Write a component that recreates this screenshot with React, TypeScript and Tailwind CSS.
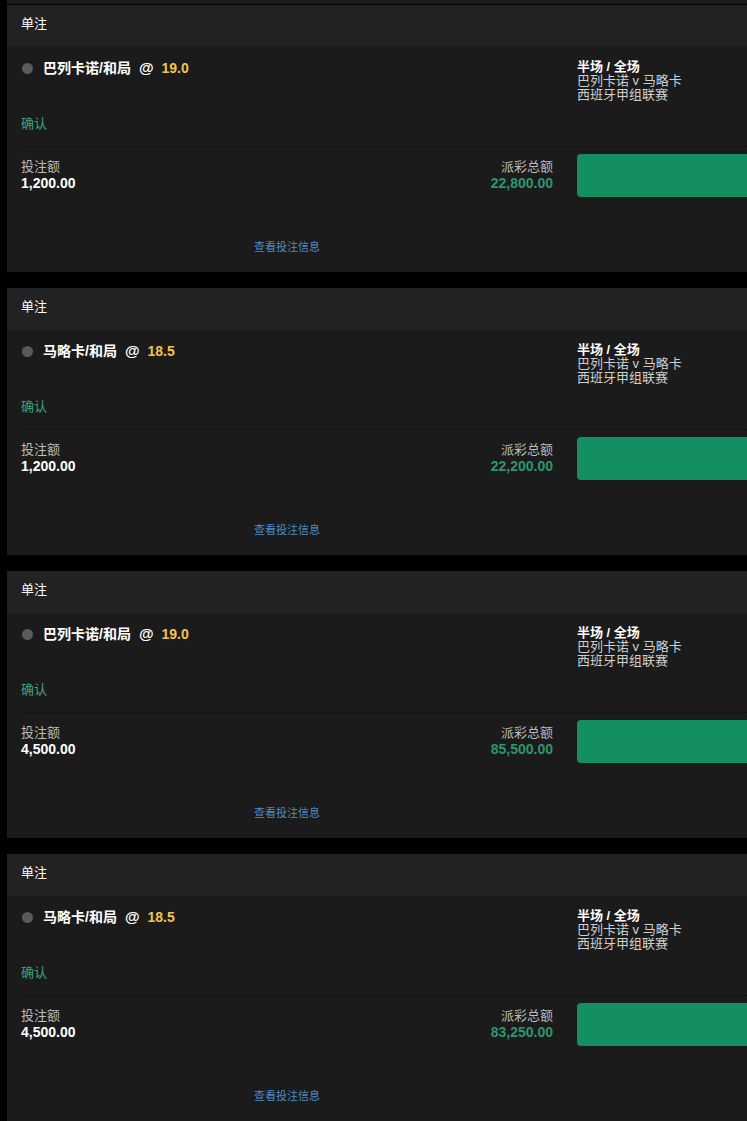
import React from "react";

type Bet = { sel: string; odds: string; stake: string; payout: string };

const bets: Bet[] = [
  { sel: "巴列卡诺/和局", odds: "19.0", stake: "1,200.00", payout: "22,800.00" },
  { sel: "马略卡/和局", odds: "18.5", stake: "1,200.00", payout: "22,200.00" },
  { sel: "巴列卡诺/和局", odds: "19.0", stake: "4,500.00", payout: "85,500.00" },
  { sel: "马略卡/和局", odds: "18.5", stake: "4,500.00", payout: "83,250.00" },
];

function Card({ b }: { b: Bet }) {
  return (
    <div className="ml-[7px] bg-[#1b1b1b]">
      <div className="h-[42px] bg-[#222222] pl-[14px] pt-[11px] text-[13px] leading-[16px] text-white">
        单注
      </div>
      <div className="pl-[14px]">
        <div className="grid grid-cols-[532px_1fr] gap-x-[24px]">
          <div className="flex items-center pt-[11px] h-[31px]">
            <span className="ml-[1px] h-[11px] w-[11px] rounded-full bg-[#5a5a5a]" />
            <span className="ml-[10px] text-[14px] font-bold leading-[20px] text-white">{b.sel}</span>
            <span className="ml-[8px] text-[15px] font-bold leading-[20px] text-white">@</span>
            <span className="ml-[8px] text-[14px] font-bold leading-[20px] text-[#f3c44c]">{b.odds}</span>
          </div>
          <div className="mt-[13px] text-[13px] leading-[14px]">
            <div className="font-bold text-white">半场 / 全场</div>
            <div className="text-[#cfcfcf]">巴列卡诺 v 马略卡</div>
            <div className="text-[#cfcfcf]">西班牙甲组联赛</div>
          </div>
        </div>
        <div className="mt-[14px] text-[13px] leading-[16px] text-[#3da57a]">确认</div>
        <div className="mt-[14px] border-t border-dotted border-[#0c0c0c]" />
        <div className="mt-[7px] grid grid-cols-[532px_1fr] gap-x-[24px]">
          <div className="flex justify-between pt-[5px]">
            <div>
              <div className="text-[13px] leading-[16px] text-[#bdbdbd]">投注额</div>
              <div className="text-[14px] font-bold leading-[16px] text-white">{b.stake}</div>
            </div>
            <div className="text-right">
              <div className="text-[13px] leading-[16px] text-[#bdbdbd]">派彩总额</div>
              <div className="text-[14px] font-bold leading-[16px] text-[#2d966c]">{b.payout}</div>
            </div>
          </div>
          <div className="h-[43px] rounded-l-[4px] bg-[#138f62]" />
        </div>
        <div className="mt-[43px] w-[532px] pb-[18px] text-center text-[11px] leading-[14px] text-[#4b8bc6]">
          查看投注信息
        </div>
      </div>
    </div>
  );
}

export default function App() {
  return (
    <div
      className="min-h-[1121px] w-[747px] overflow-hidden bg-black"
      style={{ fontFamily: '"Liberation Sans", Arial, "Noto Sans CJK SC", sans-serif' }}
    >
      <div className="ml-[7px] h-[4px] bg-[#1b1b1b]" />
      <div className="h-[1px]" />
      <div className="flex flex-col gap-[16px]">
        {bets.map((b, i) => (
          <Card key={i} b={b} />
        ))}
      </div>
    </div>
  );
}
